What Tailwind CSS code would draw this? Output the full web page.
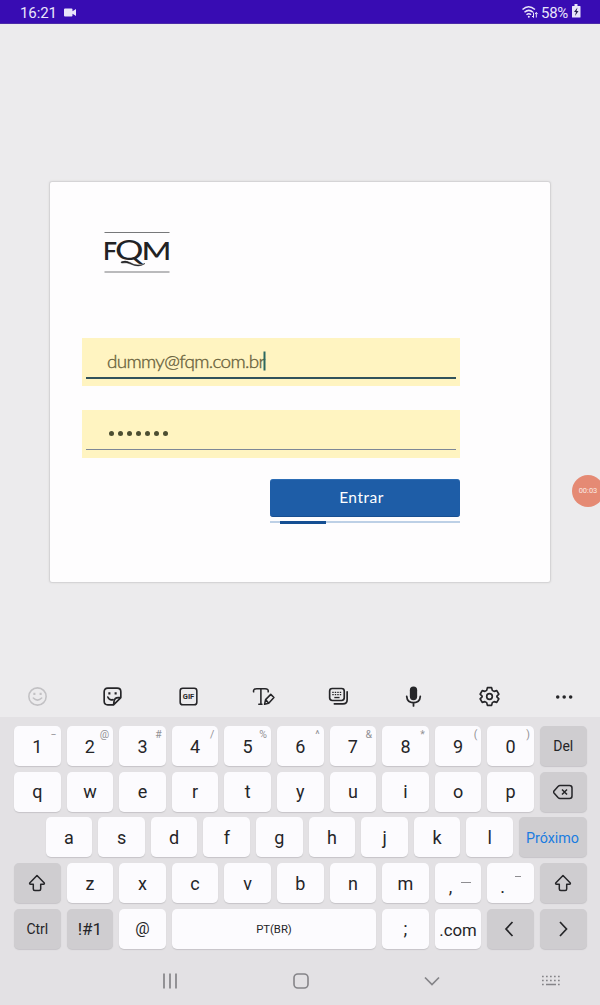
<!DOCTYPE html>
<html lang="pt-BR">
<head>
<meta charset="utf-8">
<title>FQM</title>
<script src="https://cdn.jsdelivr.net/npm/@tailwindcss/browser@4"></script>
</head>
<body class="w-[600px] h-[1005px] overflow-hidden bg-[#ecebed] font-['Roboto',sans-serif] text-[#252528] flex flex-col relative">
<!-- status bar -->
<header class="h-6 shrink-0 bg-[#380cb3] text-[#e9e5fa] flex items-center pl-[20px] pr-[19px] border-b border-[#4b2ba8]">
  <span class="text-[15px] leading-6 pt-[2px] tracking-[-0.1px]">16:21</span>
  <svg class="ml-[7px] mt-px" width="12" height="9" viewBox="0 0 12 9"><path fill="currentColor" d="M1 .5h6.500q1 0 1 1v1.700L12 1v7L8.500 5.800v1.700q0 1-1 1H1q-1 0-1-1v-6q0-1 1-1z"/></svg>
  <span class="flex-1"></span>
  <svg width="17" height="14" viewBox="0 0 17 14" fill="none" stroke="currentColor" stroke-width="1.500"><path d="M.5 4.500q6-5.500 12.500 0M2.500 7.300q4.300-3.800 8.500 0M4.500 9.800q2.300-2 4.600 0"/><circle cx="6.800" cy="11.700" r="1" fill="currentColor" stroke="none"/><path stroke-width="1" d="M11.500 7.500v5m-1.500-1.500 1.500 1.500M14.300 12.500v-5m-1.300 1.600 1.300-1.600 1.300 1.600"/></svg>
  <span class="text-[15px] leading-6 pt-[2px] ml-[2px] tracking-[-0.3px]">58%</span>
  <svg class="ml-[3px] -mt-px" width="10" height="14" viewBox="0 0 10 14"><path fill="currentColor" d="M3.500 0h3v2H9q.5 0 .5.500v10.500q0 .5-.5.500H1.500Q1 13.500 1 13V2.500q0-.5.500-.5h2z"/><path fill="#26204a" d="M6.500 3.500 3 8h2l-1 4 3.500-5h-2z"/></svg>
</header>

<main class="h-[652px] shrink-0 pt-[157px] px-[49px]">
  <section class="w-[502px] h-[402px] bg-[#fefdfe] border border-[#d5d4d6] rounded-[3px] shadow-[0_0_2px_#d6d6d6] pl-[32px] pt-[49px]">
    <svg class="ml-[22px]" width="68" height="44" viewBox="0 0 68 44" font-family="Lato, sans-serif" fill="#222224">
      <path d="M.500 1.500h65M.500 41h65" stroke="#77787a" stroke-width="1.200"/>
      <text x="-1" y="28.500" font-size="25" font-weight="600" textLength="14" lengthAdjust="spacingAndGlyphs">F</text>
      <text x="11" y="29" font-size="27" font-weight="400" textLength="28.500" lengthAdjust="spacingAndGlyphs">Q</text>
      <text x="37.500" y="28.500" font-size="25" font-weight="500" textLength="30" lengthAdjust="spacingAndGlyphs">M</text>
      <path d="M17 31q4-2 9 .5 7 4.500 15 1-6 4.500-14.500.5-4-2-9-1z" fill="#222224" stroke="#222224" stroke-width=".5"/>
    </svg>
    <div class="mt-[63px] w-[378px] h-12 bg-[#fff4c1] px-1">
      <div class="h-[41px] border-b-2 border-[#31525b] pl-[21px] pt-[12px]">
        <svg width="162" height="24" viewBox="0 0 162 24"><text transform="translate(0 18) scale(1.080 1)" font-family="Lato, sans-serif" font-weight="300" font-size="17.500" fill="#6a633d" stroke="#6a633d" stroke-width=".35" textLength="146.500">dummy@fqm.com.br</text><path d="M157.500 1.500v19" stroke="#2b6860" stroke-width="2"/></svg>
      </div>
    </div>
    <div class="mt-6 w-[378px] h-12 bg-[#fff4c1] px-1">
      <div class="h-[40px] border-b border-[#7d8796] pl-[23px] pt-[8px] flex items-center gap-1 [&>i]:size-[5px] [&>i]:rounded-full [&>i]:bg-[#4c4e32]"><i></i><i></i><i></i><i></i><i></i><i></i><i></i></div>
    </div>
    <button class="block mt-[21px] ml-[188px] w-[190px] h-[38px] rounded-[3px] bg-[#1e5da7] border-y border-t-[#2c6db5] border-b-[#184f91] text-white text-[15.500px] tracking-[.5px] pr-[7px] pb-px font-['Lato',sans-serif]">Entrar</button>
    <div class="mt-[4px] ml-[188px] w-[190px] h-[2px] bg-[#bdd0e6] flex"><span class="ml-[10px] w-[46px] h-[3px] -mt-[.5px] bg-[#154f93]"></span></div>
  </section>
</main>

<div class="absolute left-[572px] top-[475px] size-8 rounded-full bg-[#e58a74] text-[#fbe9e2] text-[7.500px] flex items-center justify-center">00:03</div>

<!-- keyboard toolbar -->
<nav class="h-[41px] shrink-0 flex justify-between pl-[25px] pr-[23px] pt-[8px] [&>svg]:size-[25px]">
  <svg viewBox="0 0 24 24" fill="none" stroke="#c2c1c4" stroke-width="1.500"><circle cx="12" cy="12" r="8.300"/><path stroke-linecap="round" d="M8 13.500q4 4 8 0"/><path stroke-width="2" d="M9 8.500v2M15 8.500v2"/></svg>
  <svg viewBox="0 0 24 24" fill="none" stroke="#252528" stroke-width="1.600" stroke-linejoin="round"><path d="M7.500 4h9q3.500 0 3.500 3.500V13l-7 7H7.500Q4 20 4 16.500v-9Q4 4 7.500 4zM20 13h-2.500q-3.500 0-4 3.500l-.5 3.500"/><path stroke-linecap="round" d="M7.500 12.500q1.500 3.500 5 2.500"/><path stroke-width="2" d="M9 8v2M15 8v2"/></svg>
  <svg viewBox="0 0 24 24"><rect x="4" y="4" width="16" height="16" rx="2.500" fill="none" stroke="#252528" stroke-width="1.500"/><text x="12" y="14.800" text-anchor="middle" font-size="7.800" font-weight="700" font-family="Roboto, sans-serif" fill="#252528" textLength="11" lengthAdjust="spacingAndGlyphs">GIF</text></svg>
  <svg viewBox="0 0 24 24" fill="none" stroke="#252528" stroke-width="1.500" stroke-linejoin="round"><path stroke-linecap="round" d="M2.500 7.500Q2 4.500 5.500 4.500h8Q17 4.500 16.500 7.500M9.500 4.500v15M7.500 19.500h3"/><path d="m13 19.500 1-4.500 5-5 3 3-5 5.500zM14 15l3 3.500"/></svg>
  <svg viewBox="0 0 24 24" fill="none" stroke="#252528" stroke-width="1.600"><rect x="3.500" y="4.300" width="14" height="11.500" rx="2.500"/><path d="M20.300 7.500V15q0 4-4 4H8" stroke-linecap="round"/><path stroke-width="1.200" stroke-dasharray="1.400 1" d="M6 8h9.500M6 10.300h9.500"/><path stroke-width="1.300" d="M8 13h5"/></svg>
  <svg viewBox="0 0 24 24" fill="none" stroke="#252528" stroke-width="1.700"><rect x="8.500" y="2.500" width="7" height="13" rx="3.500" fill="#252528" stroke="none"/><path stroke-linecap="round" d="M5.500 12q.5 6 6.500 6t6.500-6M12 18v3"/></svg>
  <svg viewBox="0 0 24 24" fill="none" stroke="#252528" stroke-width="1.600" stroke-linejoin="round"><path d="M10 3.500h4l.7 2.600 1.700 1 2.600-.7 2 3.400-1.900 1.900v.6l1.900 1.900-2 3.400-2.600-.7-1.700 1-.7 2.600h-4l-.7-2.600-1.700-1-2.600.7-2-3.400 1.900-1.900v-.6L3 9.800l2-3.400 2.600.7 1.700-1z"/><circle cx="12" cy="12" r="2.700"/></svg>
  <svg viewBox="0 0 24 24" fill="#252528"><circle cx="5.500" cy="12.500" r="1.700"/><circle cx="11.700" cy="12.500" r="1.700"/><circle cx="17.900" cy="12.500" r="1.700"/></svg>
</nav>

<!-- keyboard -->
<div class="h-[288px] shrink-0 bg-[#e3e1e4] pt-[9px] pl-[14px] pr-[13.500px] flex flex-col">
  <div class="flex flex-col gap-[5.700px] [&>div]:flex [&>div]:gap-[6px] [&>div]:h-10 [&_kbd]:relative [&_kbd]:w-[46.600px] [&_kbd]:shrink-0 [&_kbd]:flex [&_kbd]:items-center [&_kbd]:justify-center [&_kbd]:rounded-[5px] [&_kbd]:bg-[#fcfbfe] [&_kbd]:font-['Roboto',sans-serif] [&_kbd]:shadow-[0_1px_1px_#c6c4c8] [&_kbd]:text-[18px] [&_sup]:absolute [&_sup]:top-[4px] [&_sup]:right-[4px] [&_sup]:text-[10.500px] [&_sup]:leading-none [&_sup]:text-[#929195]">
    <div><kbd>1<sup>−</sup></kbd><kbd>2<sup>@</sup></kbd><kbd>3<sup>#</sup></kbd><kbd>4<sup>/</sup></kbd><kbd>5<sup>%</sup></kbd><kbd>6<sup>^</sup></kbd><kbd>7<sup>&amp;</sup></kbd><kbd>8<sup>*</sup></kbd><kbd>9<sup>(</sup></kbd><kbd>0<sup>)</sup></kbd><kbd class="bg-[#cfcdd0]!"><span class="text-[14px]">Del</span></kbd></div>
    <div><kbd>q</kbd><kbd>w</kbd><kbd>e</kbd><kbd>r</kbd><kbd>t</kbd><kbd>y</kbd><kbd>u</kbd><kbd>i</kbd><kbd>o</kbd><kbd>p</kbd><kbd class="bg-[#cfcdd0]!"><svg width="20" height="16" viewBox="0 0 20 16" fill="none" stroke="#252528" stroke-width="1.500" stroke-linejoin="round"><path d="M7 1.500h9.500q2.500 0 2.500 2.500v8q0 2.500-2.500 2.500H7Q6 14.500 5 13.500L1 9q-.8-1 0-2l4-4.500q1-1 2-1z"/><path d="m9 5.500 5 5m0-5-5 5"/></svg></kbd></div>
    <div class="pl-[31.700px]"><kbd>a</kbd><kbd>s</kbd><kbd>d</kbd><kbd>f</kbd><kbd>g</kbd><kbd>h</kbd><kbd>j</kbd><kbd>k</kbd><kbd>l</kbd><kbd class="w-[67.800px]! bg-[#cfcdd0]!"><span class="text-[14.300px] text-[#1a7ce0] pt-[2px] pr-px">Próximo</span></kbd></div>
    <div><kbd class="bg-[#cfcdd0]!"><svg width="18" height="18" viewBox="0 0 18 18" fill="none" stroke="#252528" stroke-width="1.500" stroke-linejoin="round"><path d="M9 1.500 16.300 9q.4 1.200-.8 1.200h-2.800V15q0 1.500-1.500 1.500H6.800q-1.500 0-1.500-1.500v-4.800H2.500Q1.300 10.200 1.700 9z"/></svg></kbd><kbd>z</kbd><kbd>x</kbd><kbd>c</kbd><kbd>v</kbd><kbd>b</kbd><kbd>n</kbd><kbd>m</kbd><kbd><span class="pr-[15px] pt-[7px]">,</span><i class="absolute left-[26px] top-[19px] w-[10px] h-px bg-[#8e8d91]"></i></kbd><kbd><span class="pr-[16px] pt-[7px]">.</span><i class="absolute left-[28px] top-[13px] w-[6px] h-px bg-[#8e8d91]"></i></kbd><kbd class="bg-[#cfcdd0]!"><svg width="18" height="18" viewBox="0 0 18 18" fill="none" stroke="#252528" stroke-width="1.500" stroke-linejoin="round"><path d="M9 1.500 16.300 9q.4 1.200-.8 1.200h-2.800V15q0 1.500-1.500 1.500H6.800q-1.500 0-1.500-1.500v-4.800H2.500Q1.300 10.200 1.700 9z"/></svg></kbd></div>
    <div><kbd class="bg-[#cfcdd0]!"><span class="text-[14px] pt-[2px]">Ctrl</span></kbd><kbd class="bg-[#cfcdd0]!"><span class="text-[17px] pt-px">!#1</span></kbd><kbd><span class="text-[16px]">@</span></kbd><kbd class="w-[204.400px]!"><span class="text-[11.300px] pt-[3px]">PT(BR)</span></kbd><kbd>;</kbd><kbd><span class="text-[16.800px] pt-[3px]">.com</span></kbd><kbd class="bg-[#cfcdd0]!"><svg class="mr-[3px]" width="10" height="16" viewBox="0 0 10 16" fill="none" stroke="#252528" stroke-width="1.700"><path d="M8.500 1 2 8l6.500 7"/></svg></kbd><kbd class="bg-[#cfcdd0]!"><svg width="10" height="16" viewBox="0 0 10 16" fill="none" stroke="#252528" stroke-width="1.700"><path d="M2 1l6.500 7L2 15"/></svg></kbd></div>
  </div>
  <div class="mt-[24px] flex items-center">
    <svg class="ml-[148px]" width="16" height="16" viewBox="0 0 16 16" stroke="#858488" stroke-width="1.700"><path d="M2 .5v15M8 .5v15M14 .5v15"/></svg>
    <svg class="ml-[115px]" width="16" height="16" viewBox="0 0 16 16" fill="none" stroke="#858488" stroke-width="1.600"><rect x="1" y="1" width="14" height="14" rx="3.800"/></svg>
    <svg class="ml-[115px]" width="16" height="10" viewBox="0 0 16 10" fill="none" stroke="#858488" stroke-width="1.700"><path d="m1 1.500 7 7 7-7"/></svg>
    <svg class="ml-[101px]" width="20" height="12" viewBox="0 0 20 12" stroke="#858488" stroke-width="1.600"><path stroke-dasharray="1.700 2.300" d="M1 1.500h18M1 5.500h18"/><path d="M1 9.500h1.700M5 9.500h10M17 9.500h1.700"/></svg>
  </div>
</div>
</body>
</html>
